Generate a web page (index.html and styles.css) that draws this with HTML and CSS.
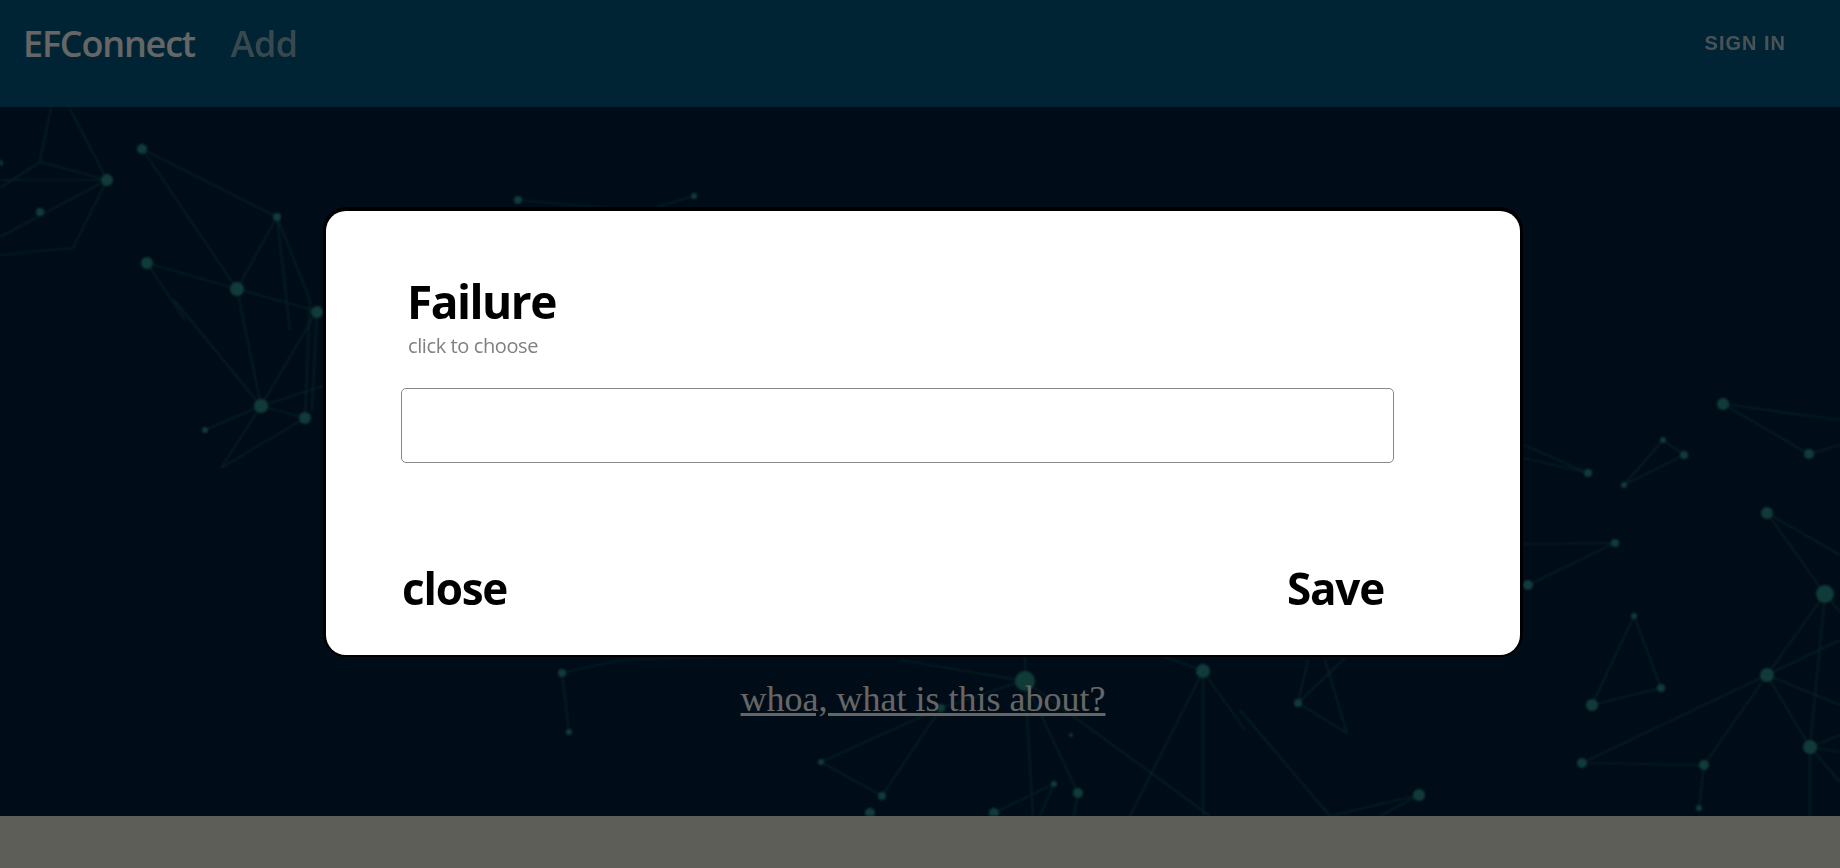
FILE: index.html
```html
<!DOCTYPE html>
<html lang="en">
<head>
  <meta charset="UTF-8">
  <title>EFConnect</title>
  <link rel="stylesheet" href="styles.css">
</head>
<body>

  <header class="navbar">
    <a class="brand" href="#">EFConnect</a>
    <a class="nav-link" href="#">Add</a>
    <a class="sign-in" href="#">SIGN IN</a>
  </header>

  <main class="hero">
    <svg class="network" viewBox="0 107 1840 709" preserveAspectRatio="none" aria-hidden="true">
      <path class="edges" d="M51 107L40 161M69 107L107 180M0 188L40 162L107 180M0 180H107M107 180L0 237M107 180L73 248L0 255M142 149L277 217M142 149L237 289L277 217M147 263L237 289L317 311M147 263L185 320M237 289L261 406M277 217L310 300L305 418M277 217L290 330M174 300L261 406M317 311L261 406M261 406L305 418M261 406L205 430M261 406L221 468L305 418M261 406L326 385M317 311L312 410M518 200L610 208M694 196L640 212M562 673L569 732M562 673L620 660L760 655M1025 681L900 660M1025 681L1025 656M1025 681L1078 793M1025 681L1210 816M1025 681L1033 816M1203 671L1130 816M1203 671V816M1203 671L1245 730M1160 655L1203 671M941 708L821 762L882 796L941 708M941 708L1025 680M1078 793L1074 816M1054 784L994 813M1054 784L1040 816M1767 513L1825 594L1767 675L1810 747L1825 594M1767 513L1840 555M1825 594L1840 612M1767 675L1840 640M1767 675L1582 763L1704 765L1767 675M1767 675L1840 705M1592 705L1634 616L1661 688L1592 705M1704 765L1699 808M1810 747V816M1810 747L1840 735M1810 747L1840 752M1810 747L1840 782M1419 795L1330 816M1419 795L1380 816M1298 703L1347 733L1325 660M1298 703L1308 660M1298 703L1345 658M1240 710L1330 816M1528 585L1615 543L1524 544M1723 404L1840 420M1723 404L1809 454L1840 445M1663 440L1684 455L1624 485L1663 440M1524 445L1588 473L1524 458"/>
      <g class="nodes">
        <circle cx="107" cy="180" r="6"/><circle cx="40" cy="212" r="4"/><circle cx="142" cy="149" r="5"/>
        <circle cx="277" cy="217" r="4"/><circle cx="147" cy="263" r="6"/><circle cx="237" cy="289" r="7"/>
        <circle cx="518" cy="200" r="4"/><circle cx="694" cy="196" r="3"/><circle cx="0" cy="163" r="3"/>
        <circle cx="317" cy="312" r="6"/><circle cx="261" cy="406" r="7"/><circle cx="305" cy="418" r="6"/>
        <circle cx="205" cy="430" r="3"/><circle cx="562" cy="673" r="4"/><circle cx="569" cy="732" r="3"/>
        <circle cx="1025" cy="681" r="10"/><circle cx="1203" cy="671" r="7"/><circle cx="941" cy="708" r="4"/>
        <circle cx="821" cy="762" r="3"/><circle cx="882" cy="796" r="4"/><circle cx="1078" cy="793" r="5"/>
        <circle cx="1054" cy="784" r="3"/><circle cx="870" cy="813" r="5"/><circle cx="994" cy="813" r="5"/>
        <circle cx="1071" cy="735" r="2"/><circle cx="1767" cy="513" r="6"/><circle cx="1615" cy="543" r="4"/>
        <circle cx="1528" cy="585" r="5"/><circle cx="1825" cy="594" r="9"/><circle cx="1767" cy="675" r="7"/>
        <circle cx="1634" cy="616" r="3"/><circle cx="1661" cy="688" r="4"/><circle cx="1592" cy="705" r="6"/>
        <circle cx="1810" cy="747" r="7"/><circle cx="1582" cy="763" r="5"/><circle cx="1704" cy="765" r="5"/>
        <circle cx="1699" cy="808" r="3"/><circle cx="1419" cy="795" r="6"/><circle cx="1298" cy="703" r="4"/>
        <circle cx="1723" cy="404" r="6"/><circle cx="1809" cy="454" r="5"/><circle cx="1663" cy="440" r="3"/>
        <circle cx="1684" cy="455" r="4"/><circle cx="1624" cy="485" r="3"/><circle cx="1588" cy="473" r="4"/>
      </g>
    </svg>
    <a class="about-link" href="#">whoa, what is this about?</a>
  </main>

  <footer class="footer"></footer>

  <div class="backdrop">
    <div class="modal">
      <h2 class="modal-title">Failure</h2>
      <p class="modal-hint">click to choose</p>
      <input class="modal-input" type="text">
      <div class="modal-actions">
        <button class="text-btn" type="button">close</button>
        <button class="text-btn save-btn" type="button">Save</button>
      </div>
    </div>
  </div>

</body>
</html>
```

FILE: styles.css
```css
body {
  margin: 0;
  height: 868px;
  overflow: hidden;
  display: flex;
  flex-direction: column;
  font-family: "Open Sans", "Noto Sans", sans-serif;
  background-color: #e8ebdc;
}

a {
  color: #fff;
  text-decoration: none;
}

.navbar {
  height: 107px;
  flex: none;
  display: flex;
  align-items: flex-start;
  background-color: #005a80;
  padding: 0 54px 0 23px;
}

.brand {
  font-size: 36px;
  font-weight: 600;
  line-height: 87px;
  letter-spacing: -1.2px;
}

.nav-link {
  font-size: 36px;
  font-weight: 600;
  line-height: 87px;
  margin-left: 36px;
  letter-spacing: -0.7px;
  opacity: 0.55;
}

.sign-in {
  margin-left: auto;
  font-family: "Liberation Sans", Arial, sans-serif;
  font-size: 20px;
  font-weight: bold;
  line-height: 87px;
  letter-spacing: 1px;
  opacity: 0.7;
}

.hero {
  position: relative;
  height: 709px;
  flex: none;
  display: flex;
  justify-content: center;
  background-color: #00203c;
  overflow: hidden;
}

.network {
  position: absolute;
  inset: 0;
  width: 100%;
  height: 100%;
  filter: blur(0.8px);
}

.edges {
  fill: none;
  stroke: #185f68;
  stroke-width: 1.2;
}

.nodes circle {
  fill: #2a9490;
}

.about-link {
  position: relative;
  margin: 567px 0 0 6px;
  height: 50px;
  font-family: "Liberation Serif", "Times New Roman", serif;
  font-size: 36px;
  line-height: 50px;
  color: #fff;
  text-decoration: underline;
}

.footer {
  flex: 1;
}

.backdrop {
  position: fixed;
  inset: 0;
  background-color: rgba(0, 0, 0, 0.6);
  display: flex;
  justify-content: center;
  align-items: flex-start;
  padding: 211px 0 0 6px;
}

.modal {
  width: 1194px;
  height: 444px;
  box-sizing: border-box;
  background-color: #fff;
  border-radius: 20px;
  box-shadow: 0 -1px 0 3px #000;
  padding: 58px 126px 0 75px;
}

.modal-title {
  margin: 0 0 0 6px;
  font-size: 46px;
  font-weight: 700;
  line-height: 64px;
  letter-spacing: -1.5px;
  color: #000;
}

.modal-hint {
  margin: 0 0 0 7px;
  font-size: 20px;
  line-height: 26px;
  letter-spacing: -0.4px;
  color: #808080;
}

.modal-input {
  display: block;
  width: 100%;
  height: 75px;
  box-sizing: border-box;
  margin-top: 29px;
  border: 1px solid #888;
  border-radius: 5px;
  background: #fff;
}

.modal-actions {
  display: flex;
  justify-content: space-between;
  margin-top: 95px;
  padding-left: 1px;
}

.text-btn {
  border: none;
  background: none;
  padding: 0;
  font-family: inherit;
  font-size: 44px;
  font-weight: 700;
  line-height: 60px;
  letter-spacing: -1.2px;
  color: #000;
  cursor: pointer;
}

.save-btn {
  margin-right: 10px;
}
```
